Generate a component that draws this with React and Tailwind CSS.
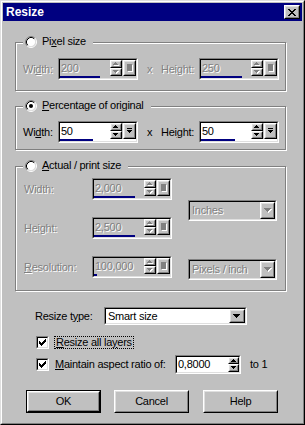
import React from 'react';

const dis = 'text-[#808080] [text-shadow:1px_1px_0_#fff]';

const Raised = ({ className = '', children }) => (
  <div className={`border border-t-white border-l-white border-r-black border-b-black ${className}`}>
    <div className="flex h-full w-full items-center justify-center border border-t-[#dfdfdf] border-l-[#dfdfdf] border-r-[#808080] border-b-[#808080] bg-[#c0c0c0]">
      {children}
    </div>
  </div>
);

const Sunken = ({ className = '', inner = '', children }) => (
  <div className={`border border-t-[#808080] border-l-[#808080] border-r-white border-b-white ${className}`}>
    <div className={`h-full w-full border border-t-black border-l-black border-r-[#dfdfdf] border-b-[#dfdfdf] ${inner}`}>
      {children}
    </div>
  </div>
);

// pixel triangle, n rows
const Tri = ({ n = 3, up, disabled }) => {
  const w = n * 2 - 1;
  const rows = Array.from({ length: n }, (_, i) => (
    <rect key={i} x={i} y={up ? n - 1 - i : i} width={w - 2 * i} height={1} />
  ));
  return (
    <svg width={w + 1} height={n + 1} shapeRendering="crispEdges">
      {disabled && <g fill="#fff" transform="translate(1,1)">{rows}</g>}
      <g fill={disabled ? '#808080' : '#000'}>{rows}</g>
    </svg>
  );
};

const DropIcon = ({ disabled }) =>
  disabled ? (
    <svg width="6" height="8" shapeRendering="crispEdges">
      <rect x="1" y="1" width="5" height="7" fill="#fff" />
      <rect x="0" y="0" width="5" height="7" fill="#808080" />
    </svg>
  ) : (
    <svg width="5" height="6" shapeRendering="crispEdges" fill="#000">
      <rect x="0" y="0" width="5" height="1" />
      <rect x="0" y="2" width="5" height="1" />
      <rect x="1" y="3" width="3" height="1" />
      <rect x="2" y="4" width="1" height="1" />
    </svg>
  );

const SpinEdit = ({ value, disabled, fill, className = 'w-[80px]' }) => (
  <Sunken className={`h-[22px] ${className}`} inner="flex flex-col bg-[#c0c0c0]">
    <div className="flex h-[16px]">
      <div className={`flex-1 pl-[1px] leading-[16px] ${disabled ? `bg-[#c0c0c0] ${dis}` : 'bg-white'}`}>{value}</div>
      <div className="flex w-[12px] flex-col">
        <Raised className="h-[8px]"><Tri up disabled={disabled} /></Raised>
        <Raised className="h-[8px]"><Tri disabled={disabled} /></Raised>
      </div>
      <Raised className="ml-[1px] h-[16px] w-[13px]"><DropIcon disabled={disabled} /></Raised>
    </div>
    <div className={`h-[2px] ${disabled ? 'bg-[#c0c0c0]' : 'bg-white'}`}>
      <div className="h-full bg-[#000080]" style={{ width: fill }} />
    </div>
  </Sunken>
);

const Combo = ({ children, disabled, className = '', btn = 'w-[15px]' }) => (
  <Sunken className={className} inner={`flex ${disabled ? 'bg-[#c0c0c0]' : 'bg-white'}`}>
    <div className={`flex flex-1 items-center pl-[2px] ${disabled ? dis : ''}`}>{children}</div>
    <Raised className={`h-full ${btn}`}><Tri n={4} disabled={disabled} /></Raised>
  </Sunken>
);

const Radio = ({ checked }) => (
  <svg width="12" height="12" viewBox="0 0 12 12">
    <circle cx="6" cy="6" r="4.5" fill="#fff" />
    <path d="M2.11 9.89A5.5 5.5 0 0 1 9.89 2.11" stroke="#808080" fill="none" />
    <path d="M9.89 2.11A5.5 5.5 0 0 1 2.11 9.89" stroke="#fff" fill="none" />
    <path d="M2.82 9.18A4.5 4.5 0 0 1 9.18 2.82" stroke="#000" fill="none" />
    <path d="M9.18 2.82A4.5 4.5 0 0 1 2.82 9.18" stroke="#dfdfdf" fill="none" />
    {checked && <circle cx="6" cy="6" r="2" fill="#000" />}
  </svg>
);

const Check = () => (
  <Sunken className="h-[13px] w-[13px]" inner="bg-white flex items-center justify-center">
    <svg width="7" height="7" shapeRendering="crispEdges" fill="#000">
      <rect x="6" y="0" width="1" height="1" />
      <rect x="5" y="1" width="2" height="1" />
      <rect x="0" y="2" width="1" height="1" />
      <rect x="4" y="2" width="3" height="1" />
      <rect x="0" y="3" width="2" height="1" />
      <rect x="3" y="3" width="3" height="1" />
      <rect x="0" y="4" width="5" height="1" />
      <rect x="1" y="5" width="3" height="1" />
      <rect x="2" y="6" width="1" height="1" />
    </svg>
  </Sunken>
);

const CloseX = () => (
  <svg width="8" height="7" shapeRendering="crispEdges" fill="#000">
    <rect x="0" y="0" width="2" height="1" /><rect x="6" y="0" width="2" height="1" />
    <rect x="1" y="1" width="2" height="1" /><rect x="5" y="1" width="2" height="1" />
    <rect x="2" y="2" width="4" height="1" />
    <rect x="3" y="3" width="2" height="1" />
    <rect x="2" y="4" width="4" height="1" />
    <rect x="1" y="5" width="2" height="1" /><rect x="5" y="5" width="2" height="1" />
    <rect x="0" y="6" width="2" height="1" /><rect x="6" y="6" width="2" height="1" />
  </svg>
);

const Group = ({ label, checked, className = '', children }) => (
  <div className={`relative w-[271px] border border-[#808080] shadow-[inset_1px_1px_0_#fff,1px_1px_0_#fff] ${className}`}>
    <div className="absolute -top-[8px] left-[7px] flex h-[13px] items-center bg-[#c0c0c0] pl-[2px] pr-[7px]">
      <Radio checked={checked} />
      <span className="ml-[5px]">{label}</span>
    </div>
    {children}
  </div>
);

const Btn = ({ children, def, className = '' }) => (
  <div className={`h-[23px] w-[75px] ${def ? 'border border-black' : ''} ${className}`}>
    <Raised className="h-full w-full">{children}</Raised>
  </div>
);

export default function App() {
  return (
    <div className="h-[425px] w-[305px] border border-t-[#dfdfdf] border-l-[#dfdfdf] border-r-black border-b-black bg-[#c0c0c0] font-['Liberation_Sans',Arial,sans-serif] text-[11px] tracking-[-0.25px] text-black">
      <div className="h-full border border-t-white border-l-white border-r-[#808080] border-b-[#808080] p-[1px]">
        <div className="flex h-[18px] items-center justify-between bg-[#000080] pl-[3px] pr-[2px]">
          <span className="text-[12px] font-bold tracking-normal text-white">Resize</span>
          <Raised className="h-[14px] w-[16px]"><CloseX /></Raised>
        </div>

        <div className="pl-[12px]">
          <Group label={<>Pi<u>x</u>el size</>} className="mt-[21px] pb-[10px] pl-[7px] pt-[15px]">
            <div className="flex items-center">
              <span className={`w-[35px] ${dis}`}>Wi<u>d</u>th:</span>
              <SpinEdit value="200" disabled fill={40} />
              <span className={`w-[23px] text-center ${dis}`}>x</span>
              <span className={`w-[38px] ${dis}`}>Hei<u>g</u>ht:</span>
              <SpinEdit value="250" disabled fill={41} />
            </div>
          </Group>

          <Group label={<><u>P</u>ercentage of original</>} checked className="mt-[15px] pb-[6px] pl-[7px] pt-[14px]">
            <div className="flex items-center">
              <span className="w-[35px]">Wi<u>d</u>th:</span>
              <SpinEdit value="50" fill={33} />
              <span className="w-[23px] text-center">x</span>
              <span className="w-[38px]">Hei<u>g</u>ht:</span>
              <SpinEdit value="50" fill={34} />
            </div>
          </Group>

          <Group label={<><u>A</u>ctual / print size</>} className="mt-[16px] pb-[10px] pl-[8px] pt-[11px]">
            <div className="flex">
              <div className="flex flex-col gap-[17px]">
                <div className="flex items-center">
                  <span className={`w-[68px] ${dis}`}>Width:</span>
                  <SpinEdit value="2,000" disabled fill={41} />
                </div>
                <div className="flex items-center">
                  <span className={`w-[68px] ${dis}`}>Height:</span>
                  <SpinEdit value="2,500" disabled fill={41} />
                </div>
                <div className="flex items-center">
                  <span className={`w-[68px] ${dis}`}><u>R</u>esolution:</span>
                  <SpinEdit value="100,000" disabled fill={3} />
                </div>
              </div>
              <div className="ml-[16px] flex flex-col">
                <Combo disabled className="mt-[22px] h-[21px] w-[89px]">Inches</Combo>
                <Combo disabled className="mt-[38px] h-[21px] w-[89px]">Pixels / inch</Combo>
              </div>
            </div>
          </Group>

          <div className="ml-[20px] mt-[16px] flex items-center">
            <span className="w-[69px]">Resize t<u>y</u>pe:</span>
            <Combo className="h-[18px] w-[143px]" btn="w-[16px]">Smart size</Combo>
          </div>

          <div className="ml-[21px] mt-[11px] flex items-center">
            <Check />
            <span className="ml-[5px] border border-dotted border-black px-[1px] leading-[11px]">
              <u>R</u>esize all la<u>y</u>ers
            </span>
          </div>

          <div className="ml-[21px] mt-[6px] flex items-center">
            <Check />
            <span className="ml-[6px] w-[120px]"><u>M</u>aintain aspect ratio of:</span>
            <Sunken className="h-[19px] w-[66px]" inner="flex bg-[#c0c0c0]">
              <div className="flex flex-1 items-center bg-white pl-[1px]">0,8000</div>
              <div className="flex w-[11px] flex-col">
                <Raised className="h-[7px]"><Tri up /></Raised>
                <Raised className="h-[8px]"><Tri /></Raised>
              </div>
            </Sunken>
            <span className="ml-[9px]">to 1</span>
          </div>

          <div className="ml-[11px] mt-[16px] flex">
            <Btn def>OK</Btn>
            <Btn className="ml-[13px]">Cancel</Btn>
            <Btn className="ml-[14px]">Help</Btn>
          </div>
        </div>
      </div>
    </div>
  );
}
